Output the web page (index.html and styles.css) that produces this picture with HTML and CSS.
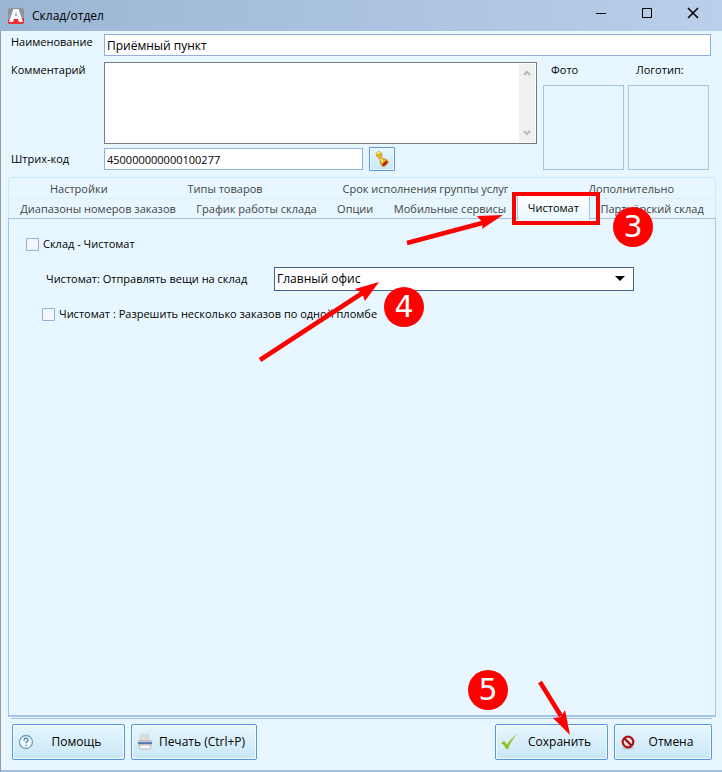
FILE: index.html
```
<!DOCTYPE html>
<html lang="ru">
<head>
    <meta charset="utf-8">
    <title>Склад/отдел</title>
    <link rel="stylesheet" href="styles.css">
</head>
<body>
    <div class="window">
        <header class="titlebar">
            <svg class="app-icon" width="16" height="16" viewBox="0 0 16 16">
                <rect width="16" height="16" rx="2" fill="#8b979c"/>
                <path d="M0 12c4-2 8 0 16-2v4a2 2 0 0 1-2 2H2a2 2 0 0 1-2-2z" fill="#ec2d35"/>
                <path d="M1 14L5.500 1h5L15 14h-4l-1-3H6l-1 3zM7 8h2L8 4z" fill="#fff" fill-rule="evenodd"/>
            </svg>
            <h1 class="title">Склад/отдел</h1>
            <div class="window-buttons">
                <button class="window-button" aria-label="Свернуть">
                    <svg width="12" height="12" viewBox="0 0 12 12"><path d="M1 6.500h10" stroke="#000"/></svg>
                </button>
                <button class="window-button" aria-label="Развернуть">
                    <svg width="12" height="12" viewBox="0 0 12 12"><path d="M1.500 1.500h9v9h-9z" fill="none" stroke="#000"/></svg>
                </button>
                <button class="window-button" aria-label="Закрыть">
                    <svg width="12" height="12" viewBox="0 0 12 12"><path d="M1 1l10 10M11 1L1 11" stroke="#000" stroke-width="1.500"/></svg>
                </button>
            </div>
        </header>

        <form class="form">
            <div class="row">
                <label for="name" class="label">Наименование</label>
                <input type="text" id="name" class="input wide" value="Приёмный пункт">
            </div>
            <div class="details">
                <div class="details-left">
                    <div class="row">
                        <label for="comment" class="label">Комментарий</label>
                        <div class="comment-box">
                            <textarea id="comment" class="comment"></textarea>
                            <div class="scrollbar">
                                <svg width="8" height="6" viewBox="0 0 8 6"><path d="M1 5l3-3 3 3" fill="none" stroke="#b8b8b8" stroke-width="2"/></svg>
                                <svg width="8" height="6" viewBox="0 0 8 6"><path d="M1 1l3 3 3-3" fill="none" stroke="#b8b8b8" stroke-width="2"/></svg>
                            </div>
                        </div>
                    </div>
                    <div class="row barcode-row">
                        <label for="barcode" class="label">Штрих-код</label>
                        <input type="text" id="barcode" class="input barcode" value="450000000000100277">
                        <button type="button" class="stamp-button" aria-label="Создать штрих-код">
                            <svg width="14" height="16" viewBox="0 0 14 16">
                                <path d="M1 3c0-3 5-3 6 0 0 2-1 3 0 4 2 1 5 1 6 3l-5 5c-3-1-3-4-3-6S1 6 1 3z" fill="#e3b51c" stroke="#bd8412" stroke-width=".7"/>
                                <path d="M2 3c0-1 2-2 3-1M6 8l2 3" fill="none" stroke="#fff3a0" stroke-width="1.500"/>
                                <ellipse cx="10" cy="12.500" rx="3.700" ry="1.800" transform="rotate(-40 10 12.500)" fill="#a51f1c" stroke="#d79917"/>
                            </svg>
                        </button>
                    </div>
                </div>
                <div class="pictures">
                    <div class="picture">
                        <span class="picture-label">Фото</span>
                        <div class="picture-frame"></div>
                    </div>
                    <div class="picture">
                        <span class="picture-label">Логотип:</span>
                        <div class="picture-frame"></div>
                    </div>
                </div>
            </div>
        </form>

        <div class="tabs">
            <div class="tab-row">
                <button class="tab">Настройки</button>
                <button class="tab">Типы товаров</button>
                <button class="tab">Срок исполнения группы услуг</button>
                <button class="tab">Дополнительно</button>
            </div>
            <div class="tab-row">
                <button class="tab">Диапазоны номеров заказов</button>
                <button class="tab">График работы склада</button>
                <button class="tab">Опции</button>
                <button class="tab">Мобильные сервисы</button>
                <button class="tab active">Чистомат</button>
                <button class="tab">Партнёрский склад</button>
            </div>
        </div>
        <main class="panel">
            <label class="check"><input type="checkbox" class="checkbox">Склад - Чистомат</label>
            <div class="target">
                <label for="target">Чистомат: Отправлять вещи на склад</label>
                <div class="select-box">
                    <select id="target" class="select">
                        <option>Главный офис</option>
                    </select>
                </div>
            </div>
            <label class="check nested"><input type="checkbox" class="checkbox">Чистомат : Разрешить несколько заказов по одной пломбе</label>
        </main>

        <footer class="footer">
            <button class="button">
                <svg class="icon" width="16" height="16" viewBox="0 0 16 16">
                    <circle cx="8" cy="8" r="6.500" fill="#f4fbff" stroke="#6f9dbb" stroke-width="1.300"/>
                    <path d="M6 6.500c0-3 4-3 4-.5 0 1.500-2 1.500-2 3.200M8 10.700v1.500" fill="none" stroke="#4a82aa" stroke-width="1.300"/>
                </svg>
                <span class="caption">Помощь</span>
            </button>
            <button class="button print">
                <svg class="icon" width="16" height="16" viewBox="0 0 16 16">
                    <path d="M3.500 0h7l1.500 1.500V7h-9z" fill="#dcdcdc" stroke="#c3c3c3" stroke-width=".5"/>
                    <path d="M2 6h12l1 2v4H1V8z" fill="#c3c6ca"/>
                    <path d="M1 8h14v2H1z" fill="#4f78b8"/>
                    <path d="M1 7h14v1H1zM3 11h10l1 4H2z" fill="#f5f5f5" stroke="#aaa" stroke-width=".6"/>
                </svg>
                <span class="caption">Печать (Ctrl+P)</span>
            </button>
            <button class="button save">
                <svg class="icon" width="16" height="16" viewBox="0 0 16 16">
                    <path d="M0 9l3-2 3 3.500C9 6 12 3 16 0c-4 5-7 9-9 15H5C4 12 2 10 0 9z" fill="#8fc31f"/>
                </svg>
                <span class="caption">Сохранить</span>
            </button>
            <button class="button cancel">
                <svg class="icon" width="16" height="16" viewBox="0 0 16 16">
                    <ellipse cx="8" cy="14.500" rx="6" ry="1" fill="#b8c8d0"/>
                    <circle cx="8" cy="8" r="5.300" fill="#f3dada" stroke="#b0141b" stroke-width="2.200"/>
                    <path d="M4.500 4.500l7 7" stroke="#8e1016" stroke-width="2.200"/>
                </svg>
                <span class="caption">Отмена</span>
            </button>
        </footer>

        <!-- numbered steps of the guide -->
        <svg class="arrows" width="722" height="772" viewBox="0 0 722 772">
            <g stroke="#f00" stroke-width="4.500" fill="#f00">
                <path d="M407 243L486 222"/>
                <path d="M260 360L364 292"/>
                <path d="M540 682L561 716"/>
            </g>
            <g fill="#f00">
                <path d="M503 215l-26 1 6 7-1 6z"/>
                <path d="M379 282l-24 7 7 4 3 8z"/>
                <path d="M570 735l-17-17 8-1 4-7z"/>
            </g>
        </svg>
        <div class="highlight"></div>
        <span class="step step-3">3</span>
        <span class="step step-4">4</span>
        <span class="step step-5">5</span>
    </div>
</body>
</html>
```
FILE: styles.css
```
* {
    box-sizing: border-box;
}

body {
    margin: 0;
    font-family: "Open Sans", "Noto Sans", sans-serif;
    font-size: 11px;
    line-height: 16px;
    color: #000;
}

button, input, select, textarea {
    font: inherit;
    color: inherit;
    margin: 0;
}

.window {
    position: relative;
    display: flex;
    flex-direction: column;
    min-height: 100vh;
    background: #e8f7ff;
    border-left: 1px solid #999;
    border-bottom: 2px solid #a0bfe8;
}

.titlebar {
    display: flex;
    align-items: center;
    height: 31px;
    margin-left: -1px;
    padding-left: 8px;
    background: linear-gradient(to right, #9bb6d4, #b9cfea);
}

.title {
    flex: 1;
    margin: 0 0 0 8px;
    font-size: 12px;
    font-weight: normal;
}

.window-buttons {
    display: flex;
    align-self: flex-start;
    padding-right: 6px;
}

.window-button {
    width: 46px;
    height: 26px;
    padding: 0;
    border: 0;
    background: none;
}

.window-button svg {
    display: block;
    margin: 0 auto;
}

.form {
    display: flex;
    flex-direction: column;
    gap: 6px;
    padding: 3px 11px 6px 10px;
}

.row {
    display: flex;
}

.label {
    flex: none;
    width: 93px;
}

.input {
    height: 22px;
    padding: 0 2px;
    border: 1px solid #8fb0dc;
    background: #fff;
}

.wide {
    flex: 1;
    font-size: 12px;
}

.details {
    display: flex;
    gap: 6px;
    padding-right: 2px;
}

.details-left {
    flex: 1;
    display: flex;
    flex-direction: column;
    gap: 3px;
}

.comment-box {
    flex: 1;
    display: flex;
    height: 82px;
    padding: 1px;
    border: 1px solid #7a7a7a;
    background: #fff;
}

.comment {
    flex: 1;
    padding: 2px;
    border: 0;
    outline: 0;
    resize: none;
}

.scrollbar {
    display: flex;
    flex-direction: column;
    align-items: center;
    justify-content: space-between;
    width: 16px;
    padding: 6px 0;
    background: #f0f0f0;
}

.barcode-row {
    align-items: center;
}

.barcode {
    width: 259px;
    margin-right: 6px;
}

.stamp-button {
    display: flex;
    align-items: center;
    justify-content: center;
    width: 26px;
    height: 24px;
    padding: 0;
    border: 1px solid #5596e0;
    border-radius: 1px;
    background: linear-gradient(#e6f6fe, #c9e7f7);
    box-shadow: inset 0 0 0 1px #f4fbff;
}

.pictures {
    display: flex;
    gap: 4px;
}

.picture {
    display: flex;
    flex-direction: column;
    width: 81px;
}

.picture-label {
    height: 23px;
    padding-left: 8px;
}

.picture-frame {
    height: 85px;
    border: 1px solid #a3c3ea;
}

.tabs {
    margin: 0 6px 0 7px;
    border: 1px solid #c9e8fa;
    border-bottom: 0;
    border-radius: 2px 2px 0 0;
}

.tab-row {
    display: flex;
    height: 20px;
    padding: 0 1px;
}

.tab-row + .tab-row {
    border-top: 1px solid #dceffb;
}

.tab {
    flex: 1 1 auto;
    padding: 1px 0 0;
    border: 0;
    background: none;
    color: #444;
    white-space: nowrap;
}

.tab.active {
    position: relative;
    height: 24px;
    margin-top: -3px;
    padding: 0;
    border: solid #a3c3ea;
    border-width: 0 1px;
    background: linear-gradient(#fff, #e8f7ff);
    color: #000;
}

.panel {
    flex: 1;
    display: flex;
    flex-direction: column;
    align-items: flex-start;
    margin: 0 6px 0 7px;
    padding: 17px;
    border: 1px solid #a3c3ea;
    border-bottom-width: 2px;
}

.check {
    display: flex;
    align-items: center;
    gap: 4px;
}

.checkbox {
    appearance: none;
    width: 13px;
    height: 13px;
    border: 1px solid #8fb0dc;
    border-radius: 1px;
    background: #f3f7ff;
}

.target {
    display: flex;
    align-items: center;
    justify-content: space-between;
    width: 588px;
    margin: 15px 0 15px 20px;
}

.select-box {
    position: relative;
    width: 360px;
}

.select {
    display: block;
    appearance: none;
    width: 100%;
    height: 24px;
    padding: 0 2px;
    border: 1px solid #44658f;
    border-radius: 0;
    background: #fff;
    font-size: 12px;
}

.select-box::after {
    content: "";
    position: absolute;
    top: 9px;
    right: 9px;
    border: 5px solid transparent;
    border-top-color: #000;
    border-bottom: 0;
    pointer-events: none;
}

.nested {
    margin-left: 16px;
}

.footer {
    display: flex;
    gap: 6px;
    margin: 1px 10px 0;
    padding: 5px 0 10px 1px;
    border-top: 1px solid #a3c3ea;
}

.button {
    display: flex;
    align-items: center;
    width: 113px;
    height: 36px;
    padding: 0 5px;
    border: 1px solid #5596e0;
    border-radius: 2px;
    background: linear-gradient(#e6f6fe, #c9e7f7);
    box-shadow: inset 0 0 0 1px #f4fbff;
    font-size: 12px;
}

.icon {
    flex: none;
}

.caption {
    flex: 1;
    text-align: center;
}

.print {
    width: 126px;
}

.save {
    margin-left: auto;
}

.cancel {
    width: 98px;
}

.arrows {
    position: absolute;
    top: 0;
    left: -1px;
    pointer-events: none;
}

.highlight {
    position: absolute;
    top: 192px;
    left: 511px;
    width: 88px;
    height: 33px;
    border: 4px solid #f00;
    pointer-events: none;
}

.step {
    position: absolute;
    width: 40px;
    height: 40px;
    border-radius: 50%;
    background: #f00;
    color: #fff;
    font-family: "DejaVu Sans", sans-serif;
    font-size: 30px;
    line-height: 40px;
    text-align: center;
}

.step-3 {
    top: 207px;
    left: 612px;
}

.step-4 {
    top: 287px;
    left: 383px;
}

.step-5 {
    top: 670px;
    left: 467px;
}
```
